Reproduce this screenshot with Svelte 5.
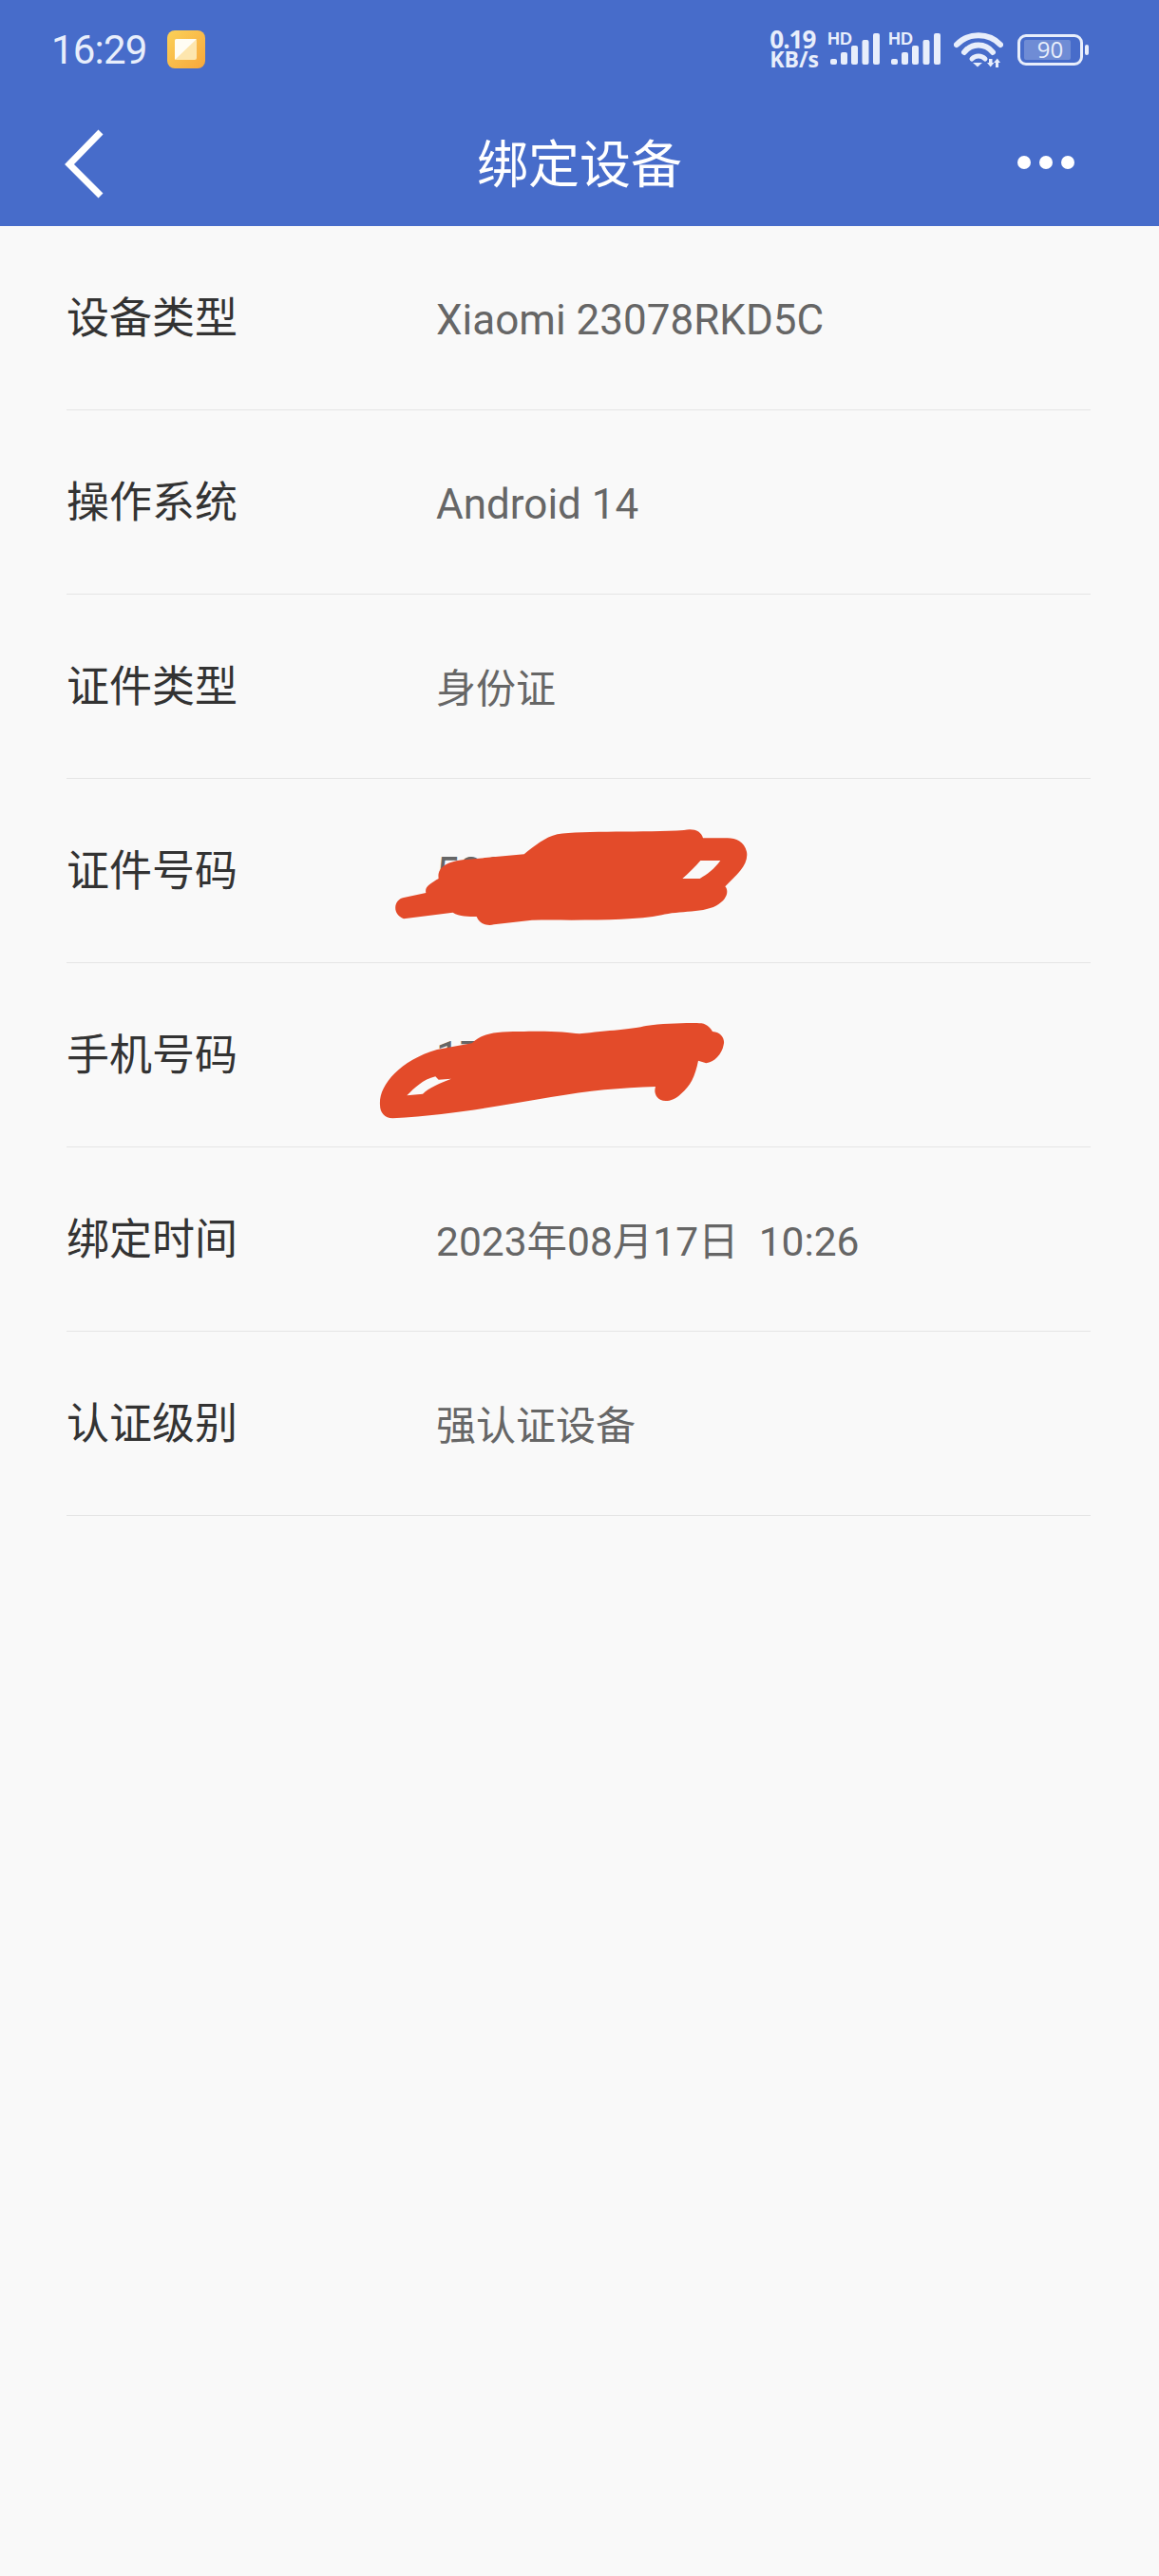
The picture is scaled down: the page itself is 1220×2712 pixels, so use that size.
<script lang="ts">
	const rows = [
		{ label: '设备类型', value: 'Xiaomi 23078RKD5C', kind: 'latin' },
		{ label: '操作系统', value: 'Android 14', kind: 'latin' },
		{ label: '证件类型', value: '身份证', kind: 'cjk' },
		{ label: '证件号码', value: '530', kind: 'latin', scribble: 'id' },
		{ label: '手机号码', value: '17', kind: 'latin', scribble: 'phone' },
		{ label: '绑定时间', value: '2023年08月17日  10:26', kind: 'mixed' },
		{ label: '认证级别', value: '强认证设备', kind: 'cjk' }
	];

	const bars = [
		{ x: 2, y: 27, w: 7 },
		{ x: 13, y: 20, w: 7 },
		{ x: 24, y: 13, w: 7 },
		{ x: 35.5, y: 7, w: 7 },
		{ x: 47, y: 0, w: 7 }
	];
</script>

{#snippet signal()}
	<svg class="signal" width="54" height="34" viewBox="0 0 54 34">
		<text x="-1" y="12" class="hd">HD</text>
		{#each bars as b}
			<rect x={b.x} y={b.y} width={b.w} height={33 - b.y} rx="2" fill="#e8eefb" />
		{/each}
	</svg>
{/snippet}

<div class="page">
	<header class="header">
		<div class="status">
			<div class="status-left">
				<span class="time">16:29</span>
				<svg width="40" height="40" viewBox="0 0 40 40">
					<defs>
						<linearGradient id="note" x1="0" y1="0" x2="1" y2="1">
							<stop offset="0" stop-color="#fbd158" />
							<stop offset="1" stop-color="#f7a73c" />
						</linearGradient>
					</defs>
					<rect width="40" height="40" rx="8" fill="url(#note)" />
					<rect x="8" y="9" width="23" height="22" rx="2" fill="#fde6ae" />
					<path d="M8 31V11a2 2 0 0 1 2-2h21z" fill="#fffdf4" />
				</svg>
			</div>
			<div class="status-right">
				<div class="speed"><span>0.19</span><span>KB/s</span></div>
				{@render signal()}
				{@render signal()}
				<svg class="wifi" width="52" height="37" viewBox="0 0 52 37" fill="none" stroke="#e8eefb" stroke-linecap="round">
					<path d="M3 13C15 0 37 0 49 13" stroke-width="6" />
					<path d="M11 21C19 11 33 11 41 21" stroke-width="6" />
					<path d="M19 28C23 24 29 24 33 28" stroke-width="5" />
					<path d="M20 32h10l-5 4.5z" fill="#e8eefb" stroke="none" />
					<path d="M37 28h3.5v4h2l-3.8 4.5L35 32h2zM44 37v-5h-2l3.800-4.500L49 32h-2v5z" fill="#e8eefb" stroke="none" />
				</svg>
				<div class="battery">
					<div class="battery-body">
						<div class="battery-fill"></div>
						<span>90</span>
					</div>
					<div class="battery-nub"></div>
				</div>
			</div>
		</div>
		<nav class="nav">
			<svg class="back" width="46" height="74" viewBox="0 0 46 74" fill="none" stroke="#fff" stroke-width="7">
				<path d="M39 3L6 37l33 33" />
			</svg>
			<h1>绑定设备</h1>
			<div class="dots"><i></i><i></i><i></i></div>
		</nav>
	</header>

	<main class="list">
		{#each rows as row}
			<div class="row">
				<span class="label">{row.label}</span>
				<span class="value {row.kind}">{row.value}</span>
				{#if row.scribble === 'id'}
					<svg class="scribble id" width="440" height="150" viewBox="0 0 1320 450">
						<path
							fill-rule="evenodd"
							d="M135 285C105 290 95 335 135 352L290 332C310 345 340 345 365 345C375 370 400 375 420 370L540 356C700 355 850 360 950 340C1000 325 1090 335 1130 305C1160 285 1160 260 1150 250C1190 210 1225 180 1218 140C1210 105 1180 95 1150 97L1080 97C1075 75 1050 65 1020 72C900 80 700 72 620 85C580 95 550 120 515 148L330 165C270 170 240 190 245 225C220 240 200 250 205 270ZM1072 168L1135 168C1115 195 1095 210 1070 225L1015 225C1035 208 1055 188 1072 168Z"
						/>
					</svg>
				{:else if row.scribble === 'phone'}
					<svg class="scribble phone" width="440" height="150" viewBox="0 0 1320 450">
						<path
							fill-rule="evenodd"
							d="M60 340C55 280 120 200 240 165L350 145C380 115 420 108 500 108C600 105 650 110 690 115C780 105 860 100 900 90C960 82 1040 80 1075 82C1095 85 1105 100 1110 108C1140 110 1150 135 1145 150C1140 180 1115 205 1090 208L1065 200C1055 250 1040 280 1010 305C985 330 950 335 935 315C925 300 928 290 930 282C820 285 720 295 600 315C450 340 300 370 100 382C75 382 60 365 60 340ZM145 310C170 285 195 260 235 250L245 260L285 257C250 270 215 285 195 305Z"
						/>
					</svg>
				{/if}
			</div>
		{/each}
	</main>
</div>

<style>
	:global(body) {
		margin: 0;
		background: #f9f9f9;
	}

	.page {
		min-height: 2712px;
		background: #f9f9f9;
		font-family: Roboto, 'Noto Sans CJK SC', sans-serif;
	}

	.header {
		height: 238px;
		background: #476cca;
	}

	.status {
		height: 104px;
		padding: 0 74px 0 54px;
		display: flex;
		align-items: center;
		justify-content: space-between;
	}

	.status-left {
		display: flex;
		align-items: center;
		gap: 21px;
	}

	.time {
		font-family: Roboto, sans-serif;
		font-size: 42px;
		letter-spacing: -0.8px;
		color: #e8eefb;
	}

	.status-right {
		display: flex;
		align-items: center;
		gap: 10px;
	}

	.speed {
		display: flex;
		flex-direction: column;
		font-family: 'Open Sans', sans-serif;
		font-weight: 700;
		color: #e8eefb;
		font-size: 23px;
		line-height: 21px;
	}

	.speed span:first-child {
		font-size: 26px;
		letter-spacing: -1px;
	}

	.signal {
		overflow: visible;
	}

	.hd {
		font-family: 'Liberation Sans', sans-serif;
		font-weight: 700;
		font-size: 18px;
		fill: #e8eefb;
	}

	.wifi {
		margin-left: 4px;
	}

	.battery {
		display: flex;
		align-items: center;
		gap: 2px;
		margin-left: 5px;
	}

	.battery-body {
		position: relative;
		width: 69px;
		height: 33px;
		box-sizing: border-box;
		border: 3px solid #e8eefb;
		border-radius: 9px;
		display: flex;
		align-items: center;
		justify-content: center;
	}

	.battery-body span {
		position: relative;
		font-family: 'Open Sans', sans-serif;
		font-size: 24px;
		line-height: 1;
		color: #e8eefb;
	}

	.battery-fill {
		position: absolute;
		left: 4px;
		top: 3px;
		bottom: 3px;
		width: 49px;
		background: rgba(255, 255, 255, 0.22);
		border-radius: 2px;
	}

	.battery-nub {
		width: 4px;
		height: 11px;
		background: #e8eefb;
		border-radius: 2px;
	}

	.nav {
		height: 134px;
		padding: 0 89px;
		display: grid;
		grid-template-columns: 1fr auto 1fr;
		align-items: center;
	}

	.back {
		margin: 3px 0 0 -22px;
	}

	.nav h1 {
		margin: 7px 0 0;
		font-size: 54px;
		font-weight: 400;
		line-height: 70px;
		color: #fff;
	}

	.dots {
		display: flex;
		justify-content: flex-end;
		gap: 9px;
	}

	.dots i {
		width: 14px;
		height: 14px;
		border-radius: 50%;
		background: #fff;
	}

	.list {
		padding: 0 72px 0 70px;
	}

	.row {
		position: relative;
		box-sizing: border-box;
		height: 194px;
		padding-bottom: 3px;
		display: flex;
		align-items: center;
		border-bottom: 1.500px solid #e5e5e5;
	}

	.label {
		width: 389px;
		margin-bottom: 3px;
		font-size: 45px;
		color: #333;
	}

	.value {
		color: #666;
		white-space: pre;
	}

	.value.latin {
		margin-top: 7px;
		font-size: 44px;
	}

	.value.cjk {
		font-size: 42px;
	}

	.value.mixed {
		font-size: 42.5px;
	}

	.scribble {
		position: absolute;
		left: 310px;
		top: 30px;
		fill: #e34b2a;
	}

	.scribble.phone {
		top: 36px;
	}
</style>
